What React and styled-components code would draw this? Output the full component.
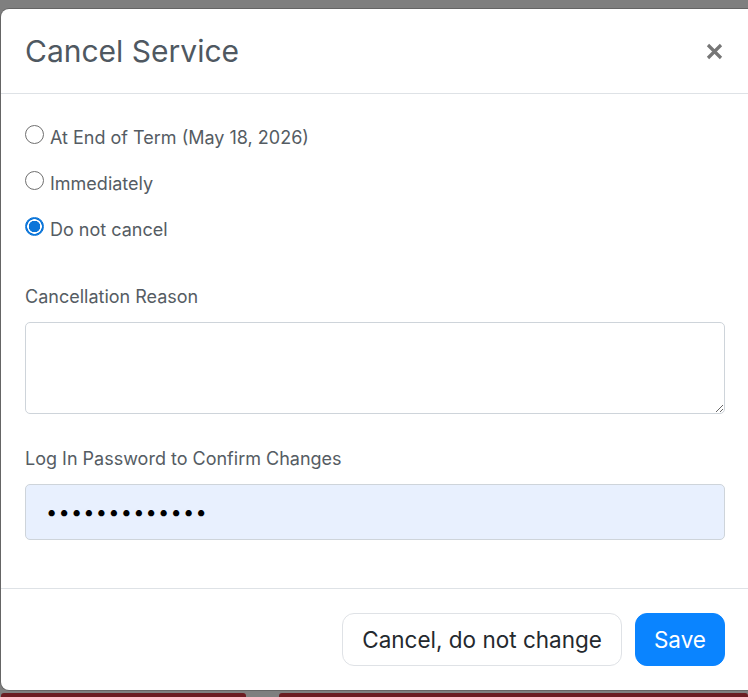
import React, { useState } from 'react'
import styled, { createGlobalStyle } from 'styled-components'

const GlobalStyle = createGlobalStyle`
  html, body {
    margin: 0;
    padding: 0;
    background: #7f7f7f;
    font-family: Inter, "Noto Sans", "Liberation Sans", sans-serif;
    overflow: hidden;
  }
`

const Backdrop = styled.div`
  height: 697px;
  padding: 9px 0 0 1px;
  box-sizing: border-box;
  position: relative;
`

const Modal = styled.div`
  width: 760px;
  background: #fff;
  border-radius: 8px;
  box-shadow: 0 0 0 1px rgba(0, 0, 0, 0.2);
  display: flex;
  flex-direction: column;
`

const Header = styled.div`
  height: 85px;
  box-sizing: border-box;
  padding: 0 24px;
  width: 748px;
  display: flex;
  align-items: center;
  justify-content: space-between;
  border-bottom: 1px solid #dee2e6;
`

const Title = styled.h2`
  margin: 0;
  font-size: 30px;
  font-weight: 400;
  color: #4f5861;
`

const CloseBtn = styled.button`
  border: 0;
  background: none;
  padding: 0;
  width: 24px;
  height: 24px;
  margin-right: -1px;
  display: flex;
  align-items: center;
  justify-content: center;
  cursor: pointer;
`

const Body = styled.div`
  width: 748px;
  box-sizing: border-box;
  padding: 20px 24px 48px 24px;
`

const RadioRow = styled.label`
  height: 46px;
  display: flex;
  align-items: center;
  gap: 6px;
  font-size: 18px;
  color: #555c63;
  cursor: pointer;
`

const Radio = styled.input`
  appearance: none;
  margin: -6px 0 0 0;
  width: 19px;
  height: 19px;
  border-radius: 50%;
  border: 1px solid #6f6f6f;
  background: #fff;
  box-sizing: border-box;
  &:checked {
    border: 1px solid #0b75d9;
    background: radial-gradient(circle, #0b75d9 0 5.5px, #fff 6px 7px, #0b75d9 7.5px);
  }
`

const FieldLabel = styled.div`
  font-size: 18px;
  line-height: 26px;
  color: #555c63;
  margin: ${p => p.$top}px 0 12px;
`

const Textarea = styled.textarea`
  display: block;
  width: 100%;
  height: 92px;
  box-sizing: border-box;
  border: 1px solid #ced4da;
  border-radius: 5px;
  font-family: inherit;
  font-size: 17px;
  padding: 8px 12px;
`

const PasswordInput = styled.input`
  display: block;
  width: 100%;
  height: 56px;
  box-sizing: border-box;
  border: 1px solid #ced4da;
  border-radius: 5px;
  background: #e8f0fe;
  padding: 0 20px;
  font-family: inherit;
  font-size: 20px;
  letter-spacing: 1.2px;
  color: #000;
  outline: none;
`

const Footer = styled.div`
  width: 748px;
  box-sizing: border-box;
  border-top: 1px solid #dee2e6;
  padding: 24px 24px 24px 24px;
  display: flex;
  justify-content: flex-end;
  gap: 13px;
`

const Button = styled.button`
  height: 53px;
  padding: 0 ${p => (p.$primary ? 18 : 19)}px;
  border-radius: 12px;
  font-family: inherit;
  font-size: 22.5px;
  border: 1px solid ${p => (p.$primary ? '#0a84ff' : '#dfe2e6')};
  background: ${p => (p.$primary ? '#0a84ff' : '#fff')};
  color: ${p => (p.$primary ? '#fff' : '#24292e')};
  cursor: pointer;
`

const BottomStrip = styled.div`
  display: flex;
  gap: 33px;
  margin-top: 3px;
`

const Bar = styled.div`
  height: 10px;
  width: ${p => p.$w}px;
  background: #6b1c22;
  border-radius: 3px 3px 0 0;
`

const options = [
  { value: 'end', label: 'At End of Term (May 18, 2026)' },
  { value: 'now', label: 'Immediately' },
  { value: 'none', label: 'Do not cancel' },
]

export default function App() {
  const [choice, setChoice] = useState('none')
  return (
    <Backdrop>
      <GlobalStyle />
      <Modal>
        <Header>
          <Title>Cancel Service</Title>
          <CloseBtn aria-label="Close">
            <svg width="17" height="17" viewBox="0 0 17 17">
              <path d="M2 2 L15 15 M15 2 L2 15" stroke="#767676" strokeWidth="3.2" strokeLinecap="butt" />
            </svg>
          </CloseBtn>
        </Header>
        <Body>
          {options.map(o => (
            <RadioRow key={o.value}>
              <Radio
                type="radio"
                name="cancel"
                checked={choice === o.value}
                onChange={() => setChoice(o.value)}
              />
              {o.label}
            </RadioRow>
          ))}
          <FieldLabel $top={32}>Cancellation Reason</FieldLabel>
          <Textarea />
          <FieldLabel $top={32}>Log In Password to Confirm Changes</FieldLabel>
          <PasswordInput type="password" defaultValue="supersecret12" />
        </Body>
        <Footer>
          <Button>Cancel, do not change</Button>
          <Button $primary>Save</Button>
        </Footer>
      </Modal>
      <BottomStrip>
        <Bar $w={245} />
        <Bar $w={470} />
      </BottomStrip>
    </Backdrop>
  )
}
